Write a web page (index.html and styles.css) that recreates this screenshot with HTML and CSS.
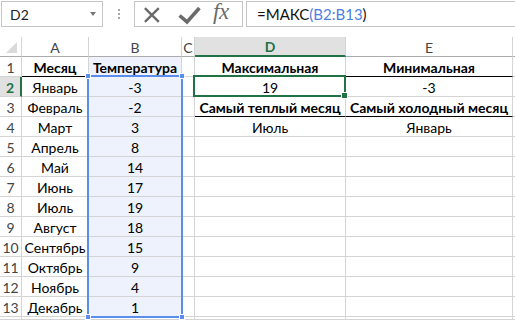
FILE: index.html
```html
<!DOCTYPE html>
<html>
<head>
<meta charset="utf-8">
<link rel="stylesheet" href="styles.css">
</head>
<body>
<div class="toolbar">
  <div class="namebox"><span class="namebox-text">D2</span><span class="caret"></span></div>
  <div class="grip"><i></i><i></i><i></i></div>
  <div class="buttons">
    <svg class="ico" width="108" height="24" viewBox="0 0 108 24">
      <path d="M10 6 L24 20 M24 6 L10 20" stroke="#6b6b6b" stroke-width="2.4" fill="none"/>
      <path d="M45 13.5 L52.5 20 L65 6" stroke="#6b6b6b" stroke-width="3.6" fill="none" stroke-linejoin="miter"/>
    </svg>
    <span class="fx">fx</span>
  </div>
  <div class="formula">=МАКС<span class="ref">(B2:B13</span>)</div>
</div>
<div class="sheet">
  <div class="grid">
    <div class="corner"><span class="tri"></span></div>
    <div class="hdr">A</div><div class="hdr">B</div><div class="hdr">C</div><div class="hdr hdr-sel">D</div><div class="hdr">E</div><div class="hdr hdr-end"></div>

    <div class="rh">1</div><div class="c b bb">Месяц</div><div class="c b bb rg">Температура</div><div class="c"></div><div class="c b">Максимальная</div><div class="c b bb">Минимальная</div><div class="c end"></div>
    <div class="rh rh-sel">2</div><div class="c">Январь</div><div class="c rg">-3</div><div class="c"></div><div class="c">19</div><div class="c">-3</div><div class="c end"></div>
    <div class="rh">3</div><div class="c">Февраль</div><div class="c rg">-2</div><div class="c"></div><div class="c b bb">Самый теплый месяц</div><div class="c b bb">Самый холодный месяц</div><div class="c end"></div>
    <div class="rh">4</div><div class="c">Март</div><div class="c rg">3</div><div class="c"></div><div class="c">Июль</div><div class="c">Январь</div><div class="c end"></div>
    <div class="rh">5</div><div class="c">Апрель</div><div class="c rg">8</div><div class="c"></div><div class="c"></div><div class="c"></div><div class="c end"></div>
    <div class="rh">6</div><div class="c">Май</div><div class="c rg">14</div><div class="c"></div><div class="c"></div><div class="c"></div><div class="c end"></div>
    <div class="rh">7</div><div class="c">Июнь</div><div class="c rg">17</div><div class="c"></div><div class="c"></div><div class="c"></div><div class="c end"></div>
    <div class="rh">8</div><div class="c">Июль</div><div class="c rg">19</div><div class="c"></div><div class="c"></div><div class="c"></div><div class="c end"></div>
    <div class="rh">9</div><div class="c">Август</div><div class="c rg">18</div><div class="c"></div><div class="c"></div><div class="c"></div><div class="c end"></div>
    <div class="rh">10</div><div class="c">Сентябрь</div><div class="c rg">15</div><div class="c"></div><div class="c"></div><div class="c"></div><div class="c end"></div>
    <div class="rh">11</div><div class="c">Октябрь</div><div class="c rg">9</div><div class="c"></div><div class="c"></div><div class="c"></div><div class="c end"></div>
    <div class="rh">12</div><div class="c">Ноябрь</div><div class="c rg">4</div><div class="c"></div><div class="c"></div><div class="c"></div><div class="c end"></div>
    <div class="rh">13</div><div class="c">Декабрь</div><div class="c rg">1</div><div class="c"></div><div class="c"></div><div class="c"></div><div class="c end"></div>
    <div class="rh"></div><div class="c"></div><div class="c"></div><div class="c"></div><div class="c"></div><div class="c"></div><div class="c end"></div>
  </div>
  <div class="range-box"><i class="h tl"></i><i class="h tr"></i><i class="h bl"></i><i class="h br"></i></div>
  <div class="active-box"><i class="fill-handle"></i></div>
</div>
</body>
</html>
```

FILE: styles.css
```css
* { box-sizing: border-box; }
html, body { margin: 0; padding: 0; background: #fff; }
body {
  width: 515px; height: 320px; overflow: hidden;
  font-family: Lato, "Noto Sans", sans-serif;
  font-size: 14px; color: #000;
}

.toolbar {
  height: 37px;
  display: flex;
  align-items: flex-start;
  padding-top: 1px;
  padding-left: 1px;
}
.namebox {
  width: 102px; height: 26px;
  border: 1px solid #c6c6c6;
  display: flex; align-items: center; justify-content: space-between;
  padding: 0 6px 0 8px;
}
.namebox-text { font-size: 14px; color: #222; }
.caret {
  width: 0; height: 0;
  border-left: 3.5px solid transparent;
  border-right: 3.5px solid transparent;
  border-top: 4px solid #777;
}
.grip {
  width: 31px; height: 26px;
  display: flex; flex-direction: column; align-items: center; justify-content: center; gap: 2px;
}
.grip i { display: block; width: 2px; height: 2px; background: #a8a8a8; }
.buttons {
  width: 109px; height: 26px;
  border: 1px solid #c6c6c6;
  position: relative;
  display: flex; align-items: center;
}
.ico { display: block; }
.fx {
  position: absolute; left: 78px; top: -3px;
  font-family: "Liberation Serif", serif; font-style: italic;
  font-size: 23px; color: #6b6b6b; letter-spacing: -0.5px;
}
.formula {
  margin-left: 3px;
  flex: 1; height: 26px;
  border: 1px solid #c6c6c6; border-right: none;
  padding-left: 10px;
  display: flex; align-items: center;
  font-size: 15px; color: #111;
}
.ref { color: #4f7ee0; }

.sheet { position: relative; }
.grid {
  display: grid;
  grid-template-columns: 22px 67px 93px 13px 151px 167px 2px;
  grid-template-rows: repeat(14, 20px) 3px;
}
.grid > div {
  border-right: 1px solid #d4d4d4;
  border-bottom: 1px solid #d4d4d4;
  display: flex; align-items: center; justify-content: center;
  white-space: nowrap; overflow: visible;
}
.corner { position: relative; border-bottom-color: #ababab !important; }
.tri {
  position: absolute; right: 4px; bottom: 3px;
  width: 0; height: 0;
  border-left: 11px solid transparent;
  border-bottom: 11px solid #dadada;
}
.hdr { color: #444; font-size: 14px; border-bottom-color: #ababab !important; padding-top: 1px; }
.hdr-sel {
  background: #e1e1e1; color: #217346; font-weight: bold;
  border-bottom: 2px solid #217346 !important;
}
.hdr-end, .end { border-right: none !important; }
.rh { color: #444; font-size: 14px; padding-top: 1px; }
.rh-sel {
  background: #e1e1e1; color: #217346; font-weight: bold;
  border-right: 2px solid #217346 !important;
}
.c { padding-top: 2px; }
.b { font-weight: bold; }
.bb { border-bottom-color: #000 !important; }
.rg { background: #eef2fc; }

.range-box {
  position: absolute; left: 87px; top: 38px;
  width: 96px; height: 243px;
  border: 2px solid #5b8ded;
}
.h {
  position: absolute; width: 6px; height: 6px;
  background: #5b8ded; border: 1px solid #fff;
}
.tl { left: -4px; top: -4px; }
.tr { right: -4px; top: -4px; }
.bl { left: -4px; bottom: -4px; }
.br { right: -4px; bottom: -4px; }

.active-box {
  position: absolute; left: 193px; top: 38px;
  width: 153px; height: 22px;
  border: 2px solid #217346;
}
.fill-handle {
  position: absolute; right: -4px; bottom: -4px;
  width: 7px; height: 7px;
  background: #217346; border: 1px solid #fff;
}
```
